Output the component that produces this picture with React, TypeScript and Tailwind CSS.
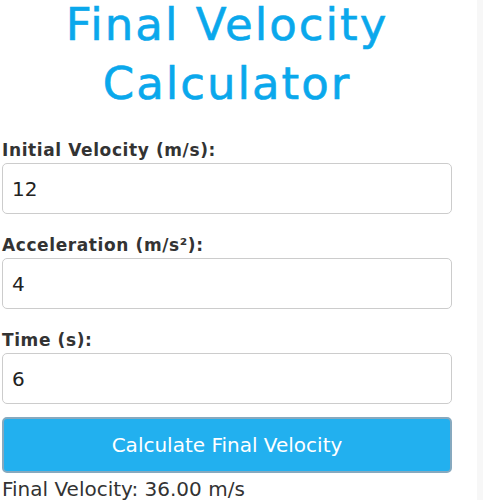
import { useState } from "react";

const FONT = { fontFamily: "'DejaVu Sans', 'Liberation Sans', sans-serif" };

const inputCls =
  "mt-[1px] block h-[51px] w-full rounded-[5px] border border-[#cccccc] bg-white pl-[9px] text-[20px] text-[#222] outline-none";
const labelCls = "block text-[17px] leading-[24px] font-bold tracking-[0.6px] text-[#333]";

export default function App() {
  const [u, setU] = useState("12");
  const [a, setA] = useState("4");
  const [t, setT] = useState("6");
  const [result, setResult] = useState("36.00");

  const calc = () => {
    const v = parseFloat(u) + parseFloat(a) * parseFloat(t);
    setResult(isNaN(v) ? "0.00" : v.toFixed(2));
  };

  return (
    <div className="flex h-[500px] w-[483px] overflow-hidden bg-white" style={FONT}>
      <div className="w-[477px] pl-[2px] pr-[25px]">
        <h1 className="text-center text-[45px] font-normal tracking-[2px] text-[#0aa8ec] [-webkit-text-stroke:0.6px_#0aa8ec]">
          <span className="block leading-[49px]">Final Velocity</span>
          <span className="mt-[5px] block leading-[59px]">Calculator</span>
        </h1>

        <label className={`${labelCls} mt-[25px]`}>Initial Velocity (m/s):</label>
        <input value={u} onChange={(e) => setU(e.target.value)} className={inputCls} />

        <label className={`${labelCls} mt-[19px]`}>Acceleration (m/s²):</label>
        <input value={a} onChange={(e) => setA(e.target.value)} className={inputCls} />

        <label className={`${labelCls} mt-[19px]`}>Time (s):</label>
        <input value={t} onChange={(e) => setT(e.target.value)} className={inputCls} />

        <button
          onClick={calc}
          className="mt-[13px] block h-[56px] w-full rounded-[5px] border-2 border-[#86a9bf] bg-[#22b0ef] text-[20px] text-white"
        >
          Calculate Final Velocity
        </button>
        <div className="mt-[4px] text-[20px] leading-[24px] text-[#333]">Final Velocity: {result} m/s</div>
      </div>
      <div className="flex-1 bg-[#f7f7f7]" />
    </div>
  );
}
